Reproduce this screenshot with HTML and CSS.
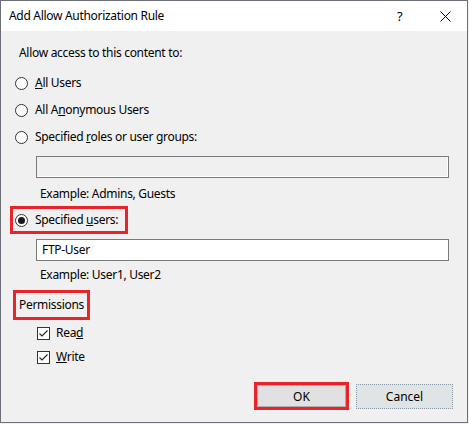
FILE: index.html
```html
<!DOCTYPE html>
<html>
<head>
<meta charset="utf-8">
<link rel="stylesheet" href="styles.css">
</head>
<body>
<div class="window">
  <div class="titlebar">
    <span class="title">Add Allow Authorization Rule</span>
    <span class="help">?</span>
    <span class="close"><svg width="11" height="11" viewBox="0 0 11 11"><path d="M0.5 0.5L10.5 10.5M10.5 0.5L0.5 10.5" stroke="#000" stroke-width="1" fill="none"/></svg></span>
  </div>
  <div class="content">
    <div class="prompt">Allow access to this content to:</div>
    <div class="radio r1"><span class="circle"></span><span><u>A</u>ll Users</span></div>
    <div class="radio r2"><span class="circle"></span><span>All A<u>n</u>onymous Users</span></div>
    <div class="radio r3"><span class="circle"></span><span>Specified <u>r</u>oles or user groups:</span></div>
    <div class="textbox disabled tb1"></div>
    <div class="example ex1">Example: Admins, Guests</div>
    <div class="radio r4"><span class="marked"><span class="circle checked"></span><span>Specified <u>u</u>sers:</span></span></div>
    <div class="textbox tb2">FTP-User</div>
    <div class="example ex2">Example: User1, User2</div>
    <div class="section"><span class="marked">Permissions</span></div>
    <div class="check c1"><span class="box"><svg width="11" height="11" viewBox="0 0 11 11"><path d="M1.5 5.5L4 8L9.5 2.5" stroke="#222" stroke-width="1.1" fill="none"/></svg></span><span>Rea<u>d</u></span></div>
    <div class="check c2"><span class="box"><svg width="11" height="11" viewBox="0 0 11 11"><path d="M1.5 5.5L4 8L9.5 2.5" stroke="#222" stroke-width="1.1" fill="none"/></svg></span><span><u>W</u>rite</span></div>
  </div>
  <div class="footer">
    <button class="btn ok">OK</button>
    <button class="btn cancel">Cancel</button>
  </div>
</div>
</body>
</html>
```

FILE: styles.css
```css
* { box-sizing: border-box; }
html, body {
  margin: 0;
  padding: 0;
  background: #f0f0f0;
}
body {
  font-family: "Noto Sans", "Open Sans", sans-serif;
  font-size: 12px;
  letter-spacing: -0.3px;
  color: #000;
  width: 469px;
  height: 424px;
}
.window {
  width: 468px;
  height: 423px;
  border: 1px solid #6b6f77;
  background: #f0f0f0;
  display: flex;
  flex-direction: column;
}
.titlebar {
  height: 30px;
  background: #fff;
  display: flex;
  align-items: center;
  flex: none;
}
.title {
  margin-left: 8px;
  flex: 1;
  margin-top: -1px;
}
.help {
  width: 12px;
  margin-right: 31px;
  font-size: 13px;
  margin-top: -1px;
}
.close {
  width: 11px;
  height: 11px;
  margin-right: 16px;
  display: flex;
}
.content {
  flex: 1;
  display: flex;
  flex-direction: column;
  align-items: flex-start;
  padding-left: 18px;
}
.prompt {
  height: 18px;
  line-height: 18px;
  margin-top: 13px;
}
.radio, .check {
  height: 18px;
  line-height: 18px;
  display: flex;
  align-items: center;
  margin-left: -4px;
}
.radio .circle {
  width: 13px;
  height: 13px;
  border: 1px solid #333;
  border-radius: 50%;
  background: #fff;
  margin-right: 7px;
  position: relative;
  flex: none;
}
.radio .circle.checked::after {
  content: "";
  position: absolute;
  left: 2px;
  top: 2px;
  width: 7px;
  height: 7px;
  border-radius: 50%;
  background: #1a1a1a;
}
.r1 { margin-top: 12px; }
.r2 { margin-top: 9px; }
.r3 { margin-top: 9px; }
.textbox {
  width: 413px;
  height: 22px;
  border: 1px solid #7a7a7a;
  background: #fff;
  margin-left: 17px;
  line-height: 20px;
  padding-left: 5px;
}
.textbox.disabled {
  background: #f0f0f0;
  box-shadow: inset -1px -1px 0 #fff;
}
.tb1 { margin-top: 10px; }
.example {
  height: 18px;
  line-height: 18px;
  margin-left: 21px;
}
.ex1 { margin-top: 7px; }
.marked {
  display: flex;
  align-items: center;
  outline: 3px solid #e8232a;
}
.r4 { margin-top: 8px; }
.r4 .marked {
  outline-offset: 2px;
  padding-right: 5px;
}
.tb2 { margin-top: 10px; }
.ex2 { margin-top: 5px; }
.section {
  height: 18px;
  line-height: 18px;
  margin-top: 12px;
}
.section .marked {
  outline-offset: 3px;
  padding-right: 0;
}
.check { margin-left: 18px; }
.check .box {
  width: 13px;
  height: 13px;
  border: 1px solid #333;
  background: #fff;
  margin-right: 6px;
  display: flex;
  flex: none;
}
.c1 { margin-top: 10px; }
.c2 { margin-top: 6px; }
.footer {
  flex: none;
  height: 52px;
  display: flex;
  justify-content: flex-end;
  align-items: flex-start;
  padding-top: 14px;
  padding-right: 14px;
  gap: 10px;
}
.btn {
  font-family: inherit;
  font-size: 12px;
  letter-spacing: 0;
  color: #000;
  width: 88px;
  height: 22px;
  padding: 0;
  background: #e1e1e1;
  border: 1px solid #adadad;
}
.ok {
  outline: 3px solid #e8232a;
  outline-offset: 0;
  width: 89px;
  margin-top: 1px;
}
.cancel {
  width: 97px;
  height: 25px;
  border: 1px dotted #8a9aa8;
  background: #e0e4e4;
}
```
